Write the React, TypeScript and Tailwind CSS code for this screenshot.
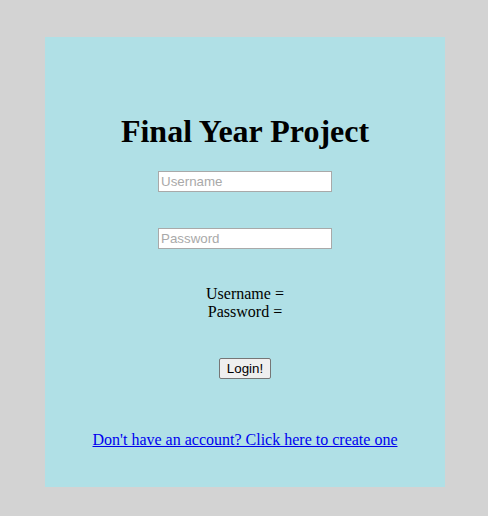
export default function App() {
  return (
    <div className="min-h-[516px] bg-[#d3d3d3] pt-[37px] font-['Liberation_Serif',serif] text-black">
      <div className="ml-[45px] flex h-[450px] w-[400px] flex-col items-center bg-[#b0e0e6]">
        <h1 className="mt-[76px] text-[32px] font-bold leading-[37px]">Final Year Project</h1>
        <input
          type="text"
          placeholder="Username"
          className="mt-[21px] h-[21px] w-[174px] border border-[#a9a9a9] bg-white px-[2px] font-['Liberation_Sans',sans-serif] text-[13.33px] placeholder:text-[#a9a9a9]"
        />
        <input
          type="password"
          placeholder="Password"
          className="mt-[36px] h-[21px] w-[174px] border border-[#a9a9a9] bg-white px-[2px] font-['Liberation_Sans',sans-serif] text-[13.33px] placeholder:text-[#a9a9a9]"
        />
        <div className="mt-[36px] text-center text-[16px] leading-[18px]">
          <p>Username =</p>
          <p>Password =</p>
        </div>
        <button className="mt-[37px] h-[21px] rounded-[2px] border border-[#767676] bg-[#efefef] px-[7px] font-['Liberation_Sans',sans-serif] text-[13.33px]">
          Login!
        </button>
        <a href="#" className="mt-[52px] text-[16px] leading-[18px] text-[#0000ee] underline">
          Don't have an account? Click here to create one
        </a>
      </div>
    </div>
  );
}
